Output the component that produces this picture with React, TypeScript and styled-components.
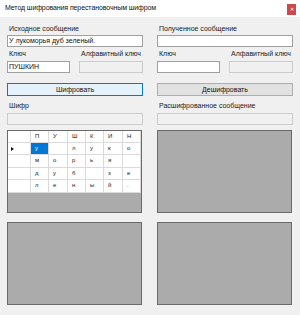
import React from "react";
import styled, { createGlobalStyle } from "styled-components";

const Global = createGlobalStyle`
  html, body { margin: 0; padding: 0; background: #f0f0f0; }
  body { font-family: "Liberation Sans", Arial, sans-serif; }
`;

const Window = styled.div`
  width: 300px;
  height: 315px;
  background: #f0f0f0;
  display: flex;
  flex-direction: column;
  overflow: hidden;
`;

const TitleBar = styled.div`
  height: 17px;
  background: #ffffff;
  display: flex;
  justify-content: space-between;
  align-items: flex-start;
  padding-left: 5px;
  box-sizing: border-box;
`;

const Title = styled.span`
  font-size: 7px;
  line-height: 10px;
  margin-top: 3px;
  color: #111;
  letter-spacing: -0.1px;
`;

const Close = styled.div`
  width: 9px;
  height: 11px;
  margin-top: 4px;
  margin-right: 4px;
  background: #cf4848;
  color: #fff;
  font-size: 5px;
  line-height: 11px;
  text-align: center;
`;

const Body = styled.div`
  display: flex;
  gap: 14px;
  padding: 7px 0 0 7px;
`;

const Column = styled.div`
  width: 136px;
  display: flex;
  flex-direction: column;
`;

const Label = styled.div<{ $mt?: number }>`
  font-size: 7px;
  line-height: 10px;
  height: 10px;
  padding-left: 2px;
  color: #1a1a1a;
  margin-top: ${(p) => p.$mt ?? 0}px;
  white-space: nowrap;
`;

const Field = styled.div<{ $disabled?: boolean; $mt?: number }>`
  height: 12px;
  box-sizing: border-box;
  border: 1px solid ${(p) => (p.$disabled ? "#cccccc" : "#a0a0a0")};
  background: ${(p) => (p.$disabled ? "#f0f0f0" : "#ffffff")};
  font-size: 7px;
  line-height: 10px;
  padding-left: 1px;
  color: #111;
  margin-top: ${(p) => p.$mt ?? 0}px;
  white-space: nowrap;
  overflow: hidden;
`;

const KeyRow = styled.div`
  display: flex;
  gap: 9px;
  margin-top: 2px;
`;

const KeyCol = styled.div<{ $w: number }>`
  width: ${(p) => p.$w}px;
  display: flex;
  flex-direction: column;
`;

const Button = styled.div<{ $primary?: boolean }>`
  margin-top: 10px;
  height: 13px;
  box-sizing: border-box;
  border: 1px solid ${(p) => (p.$primary ? "#0078d7" : "#adadad")};
  background: ${(p) => (p.$primary ? "#e5f1fb" : "#e1e1e1")};
  font-size: 7px;
  line-height: 11px;
  text-align: center;
  color: #111;
`;

const Panel = styled.div<{ $mt: number }>`
  margin-top: ${(p) => p.$mt}px;
  width: 135px;
  height: 83px;
  box-sizing: border-box;
  border: 1px solid #6a6a6a;
  background: #ababab;
  overflow: hidden;
`;

const Grid = styled.div`
  display: grid;
  grid-template-columns: 23px 18px 19px 18px 18px 19px 18px;
  grid-template-rows: 12px 12px 13px 12px 13px;
  width: 133px;
`;

const Cell = styled.div<{ $sel?: boolean }>`
  box-sizing: border-box;
  border-right: 1px solid #dadada;
  border-bottom: 1px solid #dadada;
  background: ${(p) => (p.$sel ? "#0078d7" : "#ffffff")};
  color: ${(p) => (p.$sel ? "#ffffff" : "#222")};
  font-size: 6px;
  line-height: 11px;
  padding-left: 4px;
  white-space: nowrap;
  overflow: hidden;
`;

const RowHead = styled(Cell)`
  display: flex;
  align-items: center;
  padding-left: 3px;
`;

const Arrow = styled.span`
  width: 0;
  height: 0;
  border-top: 2.5px solid transparent;
  border-bottom: 2.5px solid transparent;
  border-left: 3px solid #111;
`;

const header = ["П", "У", "Ш", "К", "И", "Н"];
const rows = [
  ["у", "", "л", "у", "к", "о"],
  ["м", "о", "р", "ь", "я", ""],
  ["д", "у", "б", "", "з", "е"],
  ["л", "е", "н", "ы", "й", "."],
];

export default function App() {
  return (
    <>
      <Global />
      <Window>
        <TitleBar>
          <Title>Метод шифрования перестановочным шифром</Title>
          <Close>✕</Close>
        </TitleBar>
        <Body>
          <Column>
            <Label>Исходное сообщение</Label>
            <Field $mt={1}>У лукоморья дуб зеленый.</Field>
            <KeyRow>
              <KeyCol $w={63}>
                <Label>Ключ</Label>
                <Field $mt={2}>ПУШКИН</Field>
              </KeyCol>
              <KeyCol $w={64}>
                <Label>Алфавитный ключ</Label>
                <Field $mt={2} $disabled />
              </KeyCol>
            </KeyRow>
            <Button $primary>Шифровать</Button>
            <Label $mt={5}>Шифр</Label>
            <Field $mt={2} $disabled />
            <Panel $mt={5}>
              <Grid>
                <Cell />
                {header.map((h, i) => (
                  <Cell key={"h" + i}>{h}</Cell>
                ))}
                {rows.map((r, ri) => (
                  <React.Fragment key={ri}>
                    <RowHead>{ri === 0 ? <Arrow /> : null}</RowHead>
                    {r.map((c, ci) => (
                      <Cell key={ci} $sel={ri === 0 && ci === 0}>
                        {c}
                      </Cell>
                    ))}
                  </React.Fragment>
                ))}
              </Grid>
            </Panel>
            <Panel $mt={9} />
          </Column>
          <Column>
            <Label>Полученное сообщение</Label>
            <Field $mt={1} />
            <KeyRow>
              <KeyCol $w={63}>
                <Label>Ключ</Label>
                <Field $mt={2} />
              </KeyCol>
              <KeyCol $w={64}>
                <Label>Алфавитный ключ</Label>
                <Field $mt={2} $disabled />
              </KeyCol>
            </KeyRow>
            <Button>Дешифровать</Button>
            <Label $mt={5}>Расшифрованное сообщение</Label>
            <Field $mt={2} $disabled />
            <Panel $mt={5} />
            <Panel $mt={9} />
          </Column>
        </Body>
      </Window>
    </>
  );
}
